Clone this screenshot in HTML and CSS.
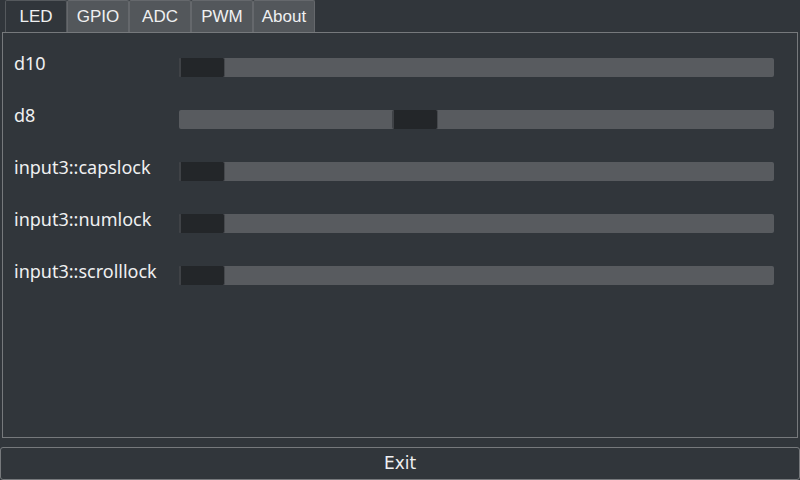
FILE: index.html
```html
<!DOCTYPE html>
<html>
<head>
<meta charset="utf-8">
<link rel="stylesheet" href="styles.css">
</head>
<body>
<div class="app">
  <div class="tabs">
    <div class="tab active">LED</div>
    <div class="tab">GPIO</div>
    <div class="tab">ADC</div>
    <div class="tab">PWM</div>
    <div class="tab">About</div>
  </div>
  <div class="panel">
    <div class="row">
      <div class="label">d10</div>
      <div class="groove"><div class="handle" style="margin-left:0px"></div></div>
    </div>
    <div class="row">
      <div class="label">d8</div>
      <div class="groove"><div class="handle" style="margin-left:213px"></div></div>
    </div>
    <div class="row">
      <div class="label">input3::capslock</div>
      <div class="groove"><div class="handle" style="margin-left:0px"></div></div>
    </div>
    <div class="row">
      <div class="label">input3::numlock</div>
      <div class="groove"><div class="handle" style="margin-left:0px"></div></div>
    </div>
    <div class="row">
      <div class="label">input3::scrolllock</div>
      <div class="groove"><div class="handle" style="margin-left:0px"></div></div>
    </div>
  </div>
  <div class="exit">Exit</div>
</div>
</body>
</html>
```

FILE: styles.css
```css
html, body {
  margin: 0;
  padding: 0;
  background: #31363b;
}
.app {
  width: 800px;
  height: 480px;
  display: flex;
  flex-direction: column;
  font-family: "DejaVu Sans", sans-serif;
  color: #eff0f1;
}
.tabs {
  display: flex;
  padding-left: 5px;
  height: 32px;
}
.tab {
  width: 62px;
  height: 32px;
  box-sizing: border-box;
  border: 1px solid #65686c;
  border-bottom: none;
  border-radius: 2px 2px 0 0;
  background: #53575b;
  font-family: "Liberation Sans", sans-serif;
  font-size: 17px;
  line-height: 32px;
  text-align: center;
}
.tab.active {
  background: #31363b;
  border-color: #55595d;
}
.panel {
  margin: 0 2px;
  height: 406px;
  box-sizing: border-box;
  border: 1px solid #76797c;
  padding: 8px 0 0 11px;
}
.row {
  height: 52px;
  display: flex;
  align-items: center;
}
.label {
  width: 165px;
  font-family: "Noto Sans", sans-serif;
  font-size: 18px;
  line-height: 24px;
  margin-bottom: 8px;
}
.groove {
  width: 595px;
  height: 19px;
  background: #585b5f;
  border-radius: 2px;
  display: flex;
}
.handle {
  width: 46px;
  height: 19px;
  box-sizing: border-box;
  background: #232629;
  border-left: 2px solid #3f4246;
  border-right: 1px solid #45484c;
  border-radius: 2px;
}
.exit {
  margin-top: 9px;
  height: 33px;
  box-sizing: border-box;
  border: 1px solid #76797c;
  border-radius: 3px;
  font-size: 17px;
  line-height: 31px;
  text-align: center;
}
```
